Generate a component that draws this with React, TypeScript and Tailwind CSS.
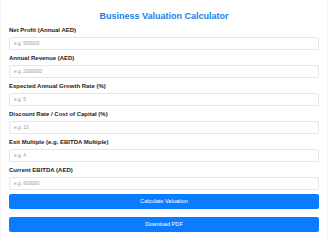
import { useState } from 'react'

const fields = [
  { id: 'netProfit', label: 'Net Profit (Annual AED)', placeholder: 'e.g. 500000' },
  { id: 'revenue', label: 'Annual Revenue (AED)', placeholder: 'e.g. 2000000' },
  { id: 'growth', label: 'Expected Annual Growth Rate (%)', placeholder: 'e.g. 5' },
  { id: 'discount', label: 'Discount Rate / Cost of Capital (%)', placeholder: 'e.g. 10' },
  { id: 'multiple', label: 'Exit Multiple (e.g. EBITDA Multiple)', placeholder: 'e.g. 4' },
  { id: 'ebitda', label: 'Current EBITDA (AED)', placeholder: 'e.g. 600000' },
]

export default function App() {
  const [values, setValues] = useState<Record<string, string>>({})

  return (
    <div className="min-h-[240px] bg-white font-['Liberation_Sans',Arial,sans-serif]">
      <div className="mx-auto w-[326px] bg-white px-2 pt-[9px] pb-2 shadow-[0_0_3px_rgba(0,0,0,0.12)]">
        <h1 className="mb-[3px] text-center text-[9px] font-bold leading-[14px] text-[#1a7ee6]">
          Business Valuation Calculator
        </h1>

        {fields.map((f) => (
          <div key={f.id} className="mb-[4px]">
            <label htmlFor={f.id} className="mb-[1.5px] block text-[6px] font-bold leading-[9px] text-[#1a1a1a]">
              {f.label}
            </label>
            <input
              id={f.id}
              type="number"
              placeholder={f.placeholder}
              value={values[f.id] || ''}
              onChange={(e) => setValues({ ...values, [f.id]: e.target.value })}
              className="block h-[13.5px] w-full rounded-[2px] border border-[#e6e6e6] px-[4px] text-[4.8px] text-[#333] placeholder:text-[#9a9a9a] outline-none"
            />
          </div>
        ))}

        <button className="mt-[4px] block h-[15px] w-full rounded-[2px] bg-[#0a7cff] text-[5.6px] leading-[15px] text-white">
          Calculate Valuation
        </button>
        <button className="mt-[8px] block h-[15px] w-full rounded-[2px] bg-[#0a7cff] text-[5.6px] leading-[15px] text-white">
          Download PDF
        </button>
      </div>
    </div>
  )
}
